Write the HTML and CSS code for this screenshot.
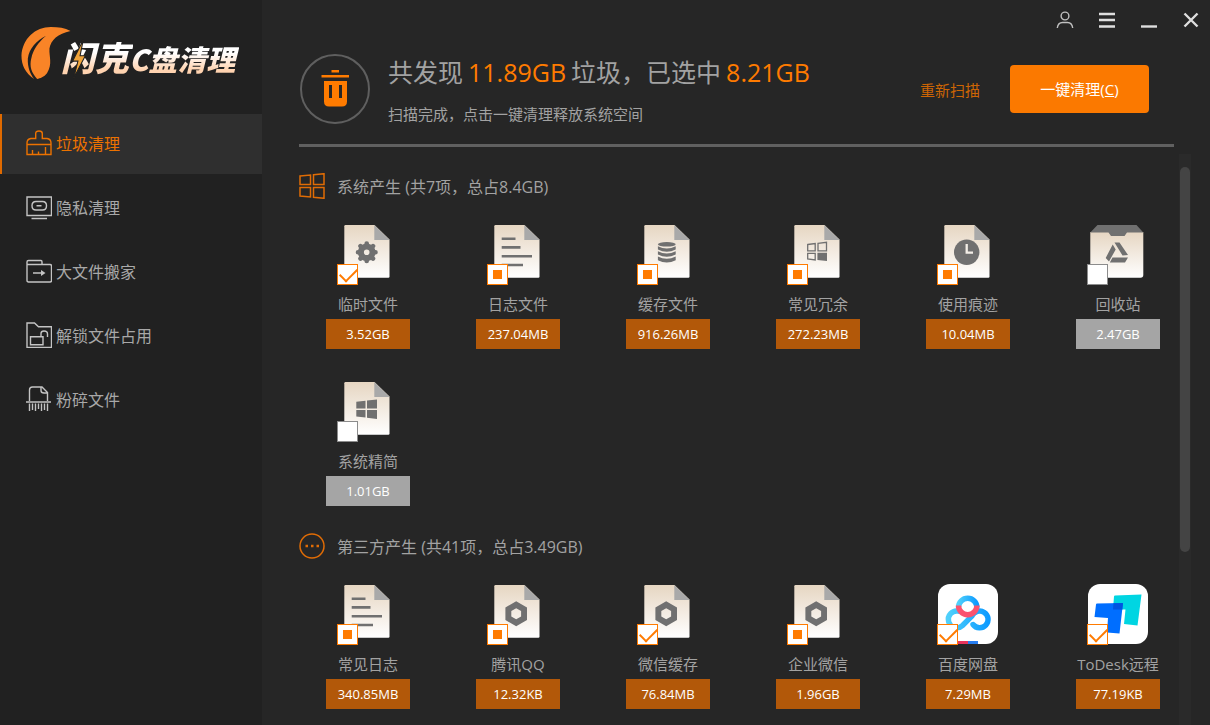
FILE: index.html
```html
<!DOCTYPE html>
<html lang="zh-CN">
<head>
<meta charset="utf-8">
<meta name="viewport" content="width=device-width, initial-scale=1">
<title>闪克C盘清理</title>
<link rel="stylesheet" href="styles.css">
</head>
<body>
<svg class="defs" aria-hidden="true">
  <defs>
    <linearGradient id="paper" x1="0" y1="0" x2="0" y2="1"><stop offset="0" stop-color="#e6d6c2"/><stop offset="1" stop-color="#fff"/></linearGradient>
    <linearGradient id="pan" x1="0" y1="0" x2="1" y2="0"><stop offset="0" stop-color="#4fd0fb"/><stop offset="1" stop-color="#0d9bff"/></linearGradient>
    <symbol id="file" viewBox="0 0 60 60"><path d="M7.5 1H36.500L51.500 15.500V52.500Q51.500 53.700 50.300 53.700H7.500Q6.300 53.700 6.300 52.500V2.200Q6.300 1 7.500 1Z" fill="url(#paper)"/><path d="M36.300 1V16H51.700Z" fill="#a9a9a9"/></symbol>
    <symbol id="lines" viewBox="0 0 60 60"><path d="M13.700 14.700H27.500M13.700 23.400H32.500M13.700 32.200H44M13.700 41H35" stroke="#707070" stroke-width="2.600"/></symbol>
    <symbol id="hexagon" viewBox="0 0 60 60"><path fill="#707070" fill-rule="evenodd" d="M28.200 17.200L39 23.400V36L28.200 42.200L17.400 36V23.400ZM28.200 24.200L23.300 27V32.400L28.200 35.200L33.100 32.400V27Z"/></symbol>
  </defs>
</svg>
<div class="app">
  <aside class="sidebar">
    <div class="brand">
      <svg class="leaf" viewBox="0 0 50 54" aria-hidden="true">
        <path fill="#f98427" d="M50 4C37 7 30 13 28.500 22C28 30 32 38 26 47C23 51 19 52 16 53C10 46 8 40 10 32C12 23 17 16 25 9C15 14 8 22 6.500 32C6 41 9 48 13 53C4 47 0 39 0 29C1 12 14 0 30 0C38 0 44 1 50 4Z"/>
      </svg>
      <span class="brand-name"><span class="brand-big">闪克</span><span class="brand-small">C盘清理</span>
        <svg class="bolt" viewBox="0 0 14 38" aria-hidden="true"><path d="M11 1L1 21H6L2 37L13 16H8Z" fill="#f0a43a" stroke="#212121" stroke-width="1"/></svg>
      </span>
    </div>
    <nav class="nav" aria-label="功能">
      <a class="nav-item active" href="#junk" aria-current="page"><svg viewBox="0 0 26 26"><path d="M1 24.500V13Q1 9 5 8.500H9.700V3.500Q9.700 1 13 1Q16.300 1 16.300 3.500V8.500H21Q25 9 25 13V24.500ZM1 14.500H25M6.500 24V20M12.500 24V21.500M19.500 24V17"/></svg>垃圾清理</a>
      <a class="nav-item" href="#privacy"><svg viewBox="0 0 26 26"><path d="M1 3H25.500V21.500H1ZM10 7.500H16.500Q20.500 7.500 20.500 11.700Q20.500 16 16.500 16H10Q6 16 6 11.700Q6 7.500 10 7.500ZM10.500 11.700H15.500M5.500 24.500H21"/></svg>隐私清理</a>
      <a class="nav-item" href="#move"><svg viewBox="0 0 26 26"><path d="M1 6.500V4Q1 2.500 2.500 2.500H15Q16 2.500 16 4V6.500M1 6.500H24Q25.500 6.500 25.500 8V22.500Q25.500 24 24 24H2.500Q1 24 1 22.500ZM7 15H18"/><path class="solid" d="M15 12L19.500 15L15 18Z"/></svg>大文件搬家</a>
      <a class="nav-item" href="#unlock"><svg viewBox="0 0 26 26"><path d="M1 1H8.500L12.500 4.800H25.500V25.500H1ZM4.500 14.700H17V22.700H4.500ZM15 14.500V11.500Q15 9 18 9Q21.500 9 21.500 12V15"/></svg>解锁文件占用</a>
      <a class="nav-item" href="#shred"><svg viewBox="0 0 26 26"><path d="M3.500 15V4Q3.500 1 6.500 1H16L21.500 6.500V15M15 1V4.500Q15 7 18 7H21.500M0 16H25M3.500 17.500V25M6.500 17.500V24M9.500 17.500V25M12.500 17.500V23M15.500 17.500V25M18.500 17.500V24M21.500 17.500V25"/></svg>粉碎文件</a>
    </nav>
  </aside>

  <main class="main">
    <div class="titlebar">
      <button type="button" aria-label="账户"><svg viewBox="0 0 18 18"><circle cx="9" cy="5" r="3.900" class="thin"/><path class="thin" d="M1.300 17Q2 11.500 6.500 11.500H11.500Q16 11.500 16.700 17"/></svg></button>
      <button type="button" aria-label="菜单"><svg viewBox="0 0 18 18"><path d="M1 3H17M1 9H17M1 15.500H17"/></svg></button>
      <button type="button" aria-label="最小化"><svg viewBox="0 0 18 18"><path d="M1 15.500H17"/></svg></button>
      <button type="button" aria-label="关闭"><svg viewBox="0 0 18 18"><path d="M2.500 2.500L15.500 15.500M15.500 2.500L2.500 15.500"/></svg></button>
    </div>

    <header class="summary">
      <svg class="trash" viewBox="0 0 70 70" aria-hidden="true"><circle cx="35" cy="35" r="34" fill="none" stroke="#5f5f5f" stroke-width="2"/><path fill="#ff7b00" fill-rule="evenodd" d="M31.500 16H39V18.500H31.500ZM21.500 21H49V23.500H21.500ZM24 27H47V47.500Q47 52.500 42 52.500H29Q24 52.500 24 47.500ZM29 31V44H32V31ZM39 31V44H42V31Z"/></svg>
      <div class="summary-text">
        <h1>共发现<strong>11.89GB</strong>垃圾，已选中<strong>8.21GB</strong></h1>
        <p>扫描完成，点击一键清理释放系统空间</p>
      </div>
      <a class="rescan" href="#rescan">重新扫描</a>
      <button class="clean" type="button" accesskey="c">一键清理(<u>C</u>)</button>
    </header>

    <div class="results">
      <div class="list">
        <section>
          <h2><svg viewBox="0 0 26 26" aria-hidden="true"><path d="M1 3L11.500 2V11.500H1ZM14.500 1.700L25 .7V11.500H14.500ZM1 14.500H11.500V24L1 23ZM14.500 14.500H25V25.300L14.500 24.200Z"/></svg>系统产生 (共7项，总占8.4GB)</h2>
          <div class="grid">
            <label class="item"><span class="pic"><svg viewBox="0 0 60 60"><use href="#file"/><circle cx="28.700" cy="28.300" r="5.800" fill="none" stroke="#707070" stroke-width="6"/><g stroke="#707070" stroke-width="4.600" stroke-linecap="round"><path d="M28.700 19.500V21M28.700 35.500V37M20 28.300H21.500M36 28.300H37.500M22.500 22.100L23.500 23.100M34 33.600L35 34.600M22.500 34.600L23.500 33.600M34 23.100L35 22.100"/></g></svg><input type="checkbox" checked></span><span class="name">临时文件</span><span class="size">3.52GB</span></label>
            <label class="item"><span class="pic"><svg viewBox="0 0 60 60"><use href="#file"/><use href="#lines"/></svg><input type="checkbox" class="partial"></span><span class="name">日志文件</span><span class="size">237.04MB</span></label>
            <label class="item"><span class="pic"><svg viewBox="0 0 60 60"><use href="#file"/><g fill="#707070"><ellipse cx="28.800" cy="20.300" rx="8.900" ry="2.300"/><path d="M19.900 22.300Q28.800 26.800 37.700 22.300V25.500Q28.800 30 19.900 25.500ZM19.900 27.300Q28.800 31.800 37.700 27.300V30.500Q28.800 35 19.900 30.500ZM19.900 32.500Q28.800 37 37.700 32.500V36.200Q28.800 41 19.900 36.200Z"/></g></svg><input type="checkbox" class="partial"></span><span class="name">缓存文件</span><span class="size">916.26MB</span></label>
            <label class="item"><span class="pic"><svg viewBox="0 0 60 60"><use href="#file"/><path fill="none" stroke="#707070" stroke-width="1.300" d="M19.700 20.500L27.200 19.500V26.800H19.700ZM30 19.300L38.500 18.300V26.800H30ZM19.700 29.300H27.200V36L19.700 35Z"/><path fill="#707070" d="M29.400 28.800H39V37L29.400 36Z"/></svg><input type="checkbox" class="partial"></span><span class="name">常见冗余</span><span class="size">272.23MB</span></label>
            <label class="item"><span class="pic"><svg viewBox="0 0 60 60"><use href="#file"/><circle cx="28.700" cy="28.300" r="12.700" fill="#707070"/><path d="M28.700 20V28.700H35" fill="none" stroke="#f3eee7" stroke-width="2.300"/></svg><input type="checkbox" class="partial"></span><span class="name">使用痕迹</span><span class="size">10.04MB</span></label>
            <label class="item off"><span class="pic"><svg viewBox="0 0 60 60"><path d="M2.300 8H55.300V51Q55.300 53.700 52.500 53.700H5Q2.300 53.700 2.300 51Z" fill="url(#paper)"/><path fill="#707070" d="M9.500 1H48.500L55.300 8.500H39L36.500 12H23L20.500 8.500H2.300Z"/><path fill="#707070" d="M26.500 18.500H31.500L40 31L34.500 31.500ZM24.700 20.500L27.700 25.500L21 37.500L17.700 34ZM24.500 33.500H40L37 38.500H21.800Z"/></svg><input type="checkbox"></span><span class="name">回收站</span><span class="size">2.47GB</span></label>
            <label class="item off"><span class="pic"><svg viewBox="0 0 60 60"><use href="#file"/><path fill="#707070" d="M18.300 20.800L27.500 19.800V27.500H18.300ZM29 19.500L39 18.400V27.500H29ZM18.300 29H27.500V36.500L18.300 35.500ZM29 29H39V38L29 36.800Z"/></svg><input type="checkbox"></span><span class="name">系统精简</span><span class="size">1.01GB</span></label>
          </div>
        </section>
        <section>
          <h2><svg viewBox="0 0 26 26" aria-hidden="true"><circle cx="13" cy="13" r="12"/><path class="dots" d="M6.500 13H9M12 13H14.500M17.500 13H20"/></svg>第三方产生 (共41项，总占3.49GB)</h2>
          <div class="grid">
            <label class="item"><span class="pic"><svg viewBox="0 0 60 60"><use href="#file"/><use href="#lines"/></svg><input type="checkbox" class="partial"></span><span class="name">常见日志</span><span class="size">340.85MB</span></label>
            <label class="item"><span class="pic"><svg viewBox="0 0 60 60"><use href="#file"/><use href="#hexagon"/></svg><input type="checkbox" class="partial"></span><span class="name">腾讯QQ</span><span class="size">12.32KB</span></label>
            <label class="item"><span class="pic"><svg viewBox="0 0 60 60"><use href="#file"/><use href="#hexagon"/></svg><input type="checkbox" checked></span><span class="name">微信缓存</span><span class="size">76.84MB</span></label>
            <label class="item"><span class="pic"><svg viewBox="0 0 60 60"><use href="#file"/><use href="#hexagon"/></svg><input type="checkbox" class="partial"></span><span class="name">企业微信</span><span class="size">1.96GB</span></label>
            <label class="item"><span class="pic"><svg viewBox="0 0 60 60"><rect width="60" height="60" rx="12" fill="#fff"/><g fill="none" stroke-width="5.400"><path stroke="url(#pan)" stroke-linecap="round" d="M20.500 27.200A8.400 8.400 0 1 0 24.500 41.500L34 32A8.400 8.400 0 1 1 35 40.500"/><path stroke="url(#pan)" d="M20.500 23.500A9.200 9.200 0 1 1 38.900 23.500"/><path stroke="#fb526f" d="M20.500 21.500A9.200 9.200 0 1 0 38.900 21.500"/></g><path fill="#e9345c" d="M20 57H30V60H20Z"/><path fill="#267df0" d="M30 57H40V60H30Z"/></svg><input type="checkbox" checked></span><span class="name">百度网盘</span><span class="size">7.29MB</span></label>
            <label class="item"><span class="pic"><svg viewBox="0 0 60 60"><rect width="60" height="60" rx="12" fill="#fff"/><path fill="#00d5e2" d="M27 11.500L53.500 10.500L49.500 41.500L36 40L37.500 25.500H25L26 12.500Q26.200 11.600 27 11.500Z"/><path fill="#006eff" d="M9 19.500L35 19L31.500 49.500L19 48.500L20 34L6.500 33L8 20.500Q8.200 19.600 9 19.500Z"/><path fill="#0055e0" d="M25.500 19.200L35 19L34.300 25.500H25Z"/></svg><input type="checkbox" checked></span><span class="name">ToDesk远程</span><span class="size">77.19KB</span></label>
          </div>
        </section>
      </div>
      <div class="track" aria-hidden="true"><div class="thumb"></div></div>
    </div>
  </main>
</div>
</body>
</html>
```
FILE: styles.css
```css
* { box-sizing: border-box; }

body {
  margin: 0;
  background: #262626;
  color: #a2a2a2;
  font-family: "Open Sans", "Noto Sans CJK SC", sans-serif;
  font-size: 15px;
  font-weight: 400;
}

button { font: inherit; border: 0; cursor: pointer; }
a { text-decoration: none; }
h1, h2, p { margin: 0; font-weight: inherit; }

.defs { position: absolute; width: 0; height: 0; }

.app {
  display: grid;
  grid-template-columns: 262px 1fr;
  min-height: 100vh;
}

/* Sidebar */
.sidebar { background: #212121; }

.brand {
  display: flex;
  align-items: flex-start;
  height: 114px;
  padding: 27px 0 0 21px;
}
.leaf { width: 50px; height: 53px; flex: none; }

.brand-name {
  position: relative;
  display: flex;
  align-items: baseline;
  margin: 6px 0 0 -10px;
  line-height: 48px;
  font-family: "Noto Sans CJK SC", sans-serif;
  font-weight: 900;
  font-style: italic;
  white-space: nowrap;
}
.brand-name span {
  padding-right: 4px;
  margin-right: -4px;
  background: linear-gradient(#fff 40%, #ffd3b0 75%);
  -webkit-background-clip: text;
  background-clip: text;
  color: transparent;
}
.brand-big { font-size: 34px; }
.brand-small { font-size: 29px; }
.bolt { position: absolute; left: 9px; top: 6px; width: 18px; height: 40px; }

.nav { display: grid; gap: 4px; }
.nav-item {
  display: flex;
  align-items: center;
  gap: 4px;
  height: 60px;
  padding: 0 0 2px 24px;
  border-left: 2px solid transparent;
  color: #a8a8a8;
  font-size: 16px;
}
.nav-item svg {
  width: 26px;
  height: 26px;
  fill: none;
  stroke: #c4c4c4;
  stroke-width: 1.4;
}
.nav-item .solid { fill: #c4c4c4; stroke: none; }
.nav-item.active {
  background: #2f2f2f;
  border-color: #e06a00;
  color: #ec7200;
}
.nav-item.active svg { stroke: #ec7200; }

/* Main panel */
.main {
  display: flex;
  flex-direction: column;
  min-width: 0;
  padding-left: 37px;
}

.titlebar {
  display: flex;
  justify-content: flex-end;
  gap: 4px;
  height: 40px;
}
.titlebar button {
  display: grid;
  place-items: center;
  width: 38px;
  padding: 0;
  background: none;
}
.titlebar svg {
  width: 18px;
  height: 18px;
  fill: none;
  stroke: #dedede;
  stroke-width: 2.4;
}
.titlebar .thin { stroke-width: 1.4; stroke: #c0c0c0; }

.summary {
  display: flex;
  align-items: center;
  margin-right: 36px;
  padding: 14px 25px 20px 1px;
  border-bottom: 3px solid #606060;
}
.trash { width: 70px; height: 70px; flex: none; }
.summary-text { flex: 1; margin-left: 18px; white-space: nowrap; }
.summary-text h1 {
  margin-bottom: 14px;
  font-size: 25px;
  line-height: 36px;
}
.summary-text strong {
  margin: 0 5px;
  color: #ff7b00;
  font-weight: 400;
}
.summary-text p { line-height: 20px; }
.rescan { margin-right: 30px; color: #cd6504; }
.clean {
  width: 139px;
  height: 48px;
  padding: 0 0 2px;
  border-radius: 4px;
  background: #fb7900;
  color: #fff;
}

/* Result list */
.results { display: flex; flex: 1; }
.list { flex: 1; min-width: 0; padding: 26px 0 16px; }
.list section + section { margin-top: 27px; }

.list h2 {
  display: flex;
  align-items: center;
  gap: 12px;
  height: 26px;
  font-size: 16px;
}
.list h2 svg {
  width: 26px;
  height: 26px;
  fill: none;
  stroke: #e06c05;
  stroke-width: 1.5;
}
.list h2 .dots { stroke-width: 2.4; }

.grid {
  display: grid;
  grid-template-columns: repeat(6, 84px);
  justify-content: space-between;
  row-gap: 32px;
  padding: 25px 19px 0 27px;
}

.item { display: flex; flex-direction: column; align-items: center; }
.pic { position: relative; width: 60px; height: 60px; }
.pic svg { display: block; width: 60px; height: 60px; }

.pic input {
  position: absolute;
  left: -1px;
  bottom: -1px;
  width: 21px;
  height: 21px;
  margin: 0;
  appearance: none;
  border: 1px solid #8c8c8c;
  background: #fff;
}
.pic input:checked, .pic .partial { border-color: #ff7b00; }
.pic input:checked::before {
  content: "";
  position: absolute;
  left: 2px;
  top: 4px;
  width: 15px;
  height: 8px;
  border: solid #ff7b00;
  border-width: 0 0 2px 2px;
  transform: translateY(-1px) rotate(-45deg);
}
.pic .partial::before {
  content: "";
  position: absolute;
  inset: 5px;
  background: #ff7b00;
}

.name { margin-top: 10px; line-height: 20px; white-space: nowrap; }
.size {
  align-self: stretch;
  margin-top: 5px;
  background: #b25809;
  color: #fff;
  font-size: 13px;
  line-height: 30px;
  text-align: center;
}
.off .size { background: #a5a5a5; }

.track {
  width: 12px;
  margin: 7px 19px 0 0;
  padding: 13px 1px 0;
  background: #2a2a2a;
}
.thumb { height: 69%; border-radius: 5px; background: #444; }
```
